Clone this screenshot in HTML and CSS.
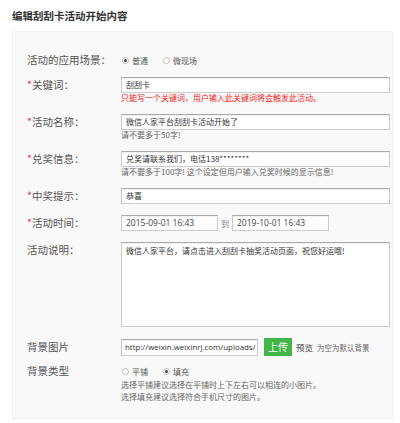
FILE: index.html
```html
<!DOCTYPE html>
<html lang="zh-CN">
<head>
<meta charset="utf-8">
<title>编辑刮刮卡活动开始内容</title>
<link rel="stylesheet" href="styles.css">
</head>
<body>
<h2 class="title">编辑刮刮卡活动开始内容</h2>
<div class="panel">
  <div class="row row-first">
    <div class="label">活动的应用场景：</div>
    <div class="field radios">
      <span class="radio on"></span><span class="rtext">普通</span>
      <span class="radio"></span><span class="rtext">微现场</span>
    </div>
  </div>
  <div class="row row-kw">
    <div class="label"><span class="req">*</span>关键词：</div>
    <div class="field">
      <div class="input wide">刮刮卡</div>
      <div class="help red">只能写一个关键词，用户输入此关键词将会触发此活动。</div>
    </div>
  </div>
  <div class="row">
    <div class="label"><span class="req">*</span>活动名称：</div>
    <div class="field">
      <div class="input wide">微信人家平台刮刮卡活动开始了</div>
      <div class="help">请不要多于50字!</div>
    </div>
  </div>
  <div class="row">
    <div class="label"><span class="req">*</span>兑奖信息：</div>
    <div class="field">
      <div class="input wide">兑奖请联系我们，电话138********</div>
      <div class="help">请不要多于100字! 这个设定但用户输入兑奖时候的显示信息!</div>
    </div>
  </div>
  <div class="row">
    <div class="label"><span class="req">*</span>中奖提示：</div>
    <div class="field">
      <div class="input wide">恭喜</div>
    </div>
  </div>
  <div class="row">
    <div class="label"><span class="req">*</span>活动时间：</div>
    <div class="field time">
      <div class="input date">2015-09-01 16:43</div>
      <span class="to">到</span>
      <div class="input date">2019-10-01 16:43</div>
    </div>
  </div>
  <div class="row">
    <div class="label">活动说明：</div>
    <div class="field">
      <div class="input textarea">微信人家平台，请点击进入刮刮卡抽奖活动页面，祝您好运哦!</div>
    </div>
  </div>
  <div class="row row-bg">
    <div class="label">背景图片</div>
    <div class="field upload">
      <div class="input url">http://weixin.weixinrj.com/uploads/</div>
      <span class="btn">上传</span>
      <span class="preview">预览</span>
      <span class="note">为空为默认背景</span>
    </div>
  </div>
  <div class="row row-type">
    <div class="label">背景类型</div>
    <div class="field">
      <div class="radios">
        <span class="radio"></span><span class="rtext">平铺</span>
        <span class="radio on"></span><span class="rtext">填充</span>
      </div>
      <div class="help2">选择平铺建议选择在平铺时上下左右可以相连的小图片。</div>
      <div class="help2">选择填充建议选择符合手机尺寸的图片。</div>
    </div>
  </div>
</div>
</body>
</html>
```

FILE: styles.css
```css
html, body {
  margin: 0;
  padding: 0;
  background: #fff;
}
body {
  font-family: "Noto Sans CJK SC", "Noto Sans", sans-serif;
  color: #555;
}
.title {
  margin: 0;
  padding: 9px 12px 0;
  font-size: 10.5px;
  line-height: 14px;
  font-weight: bold;
  color: #333;
}
.panel {
  margin: 8px 0 0 12px;
  width: 381px;
  box-sizing: border-box;
  background: #f9f9f9;
  border: 1px solid #f0f0f0;
  padding: 20px 0 15px 14px;
}
.row {
  display: flex;
  align-items: flex-start;
  margin-top: 11px;
}
.row-first { margin-top: 0; }
.row-kw { margin-top: 9px; }
.row-bg { margin-top: 11px; }
.row-type { margin-top: 7px; }
.label {
  width: 94px;
  flex: none;
  font-size: 10.5px;
  line-height: 16px;
  color: #555;
  white-space: nowrap;
}
.row-bg .label { line-height: 18px; }
.req { color: #e33; }
.field {
  flex: none;
  font-size: 8px;
}
.radios {
  display: flex;
  align-items: center;
  height: 16px;
  font-size: 8px;
  color: #555;
}
.radio {
  width: 7px;
  height: 7px;
  box-sizing: border-box;
  border: 1px solid #bbb;
  border-radius: 50%;
  background: #fff;
  position: relative;
  margin: 0 3px 0 1px;
}
.radio.on::after {
  content: "";
  position: absolute;
  left: 1px;
  top: 1px;
  width: 3px;
  height: 3px;
  border-radius: 50%;
  background: #444;
}
.rtext { margin-right: 14px; }
.input {
  box-sizing: border-box;
  height: 16px;
  background: #fff;
  border: 1px solid #ccc;
  border-top-color: #aaa;
  box-shadow: inset 0 1px 1px rgba(0, 0, 0, 0.06);
  font-size: 8px;
  line-height: 14px;
  padding: 0 4px;
  color: #333;
  white-space: nowrap;
  overflow: hidden;
}
.wide { width: 269px; }
.help {
  font-size: 8px;
  line-height: 10px;
  color: #666;
  white-space: nowrap;
}
.help.red { color: #e22; }
.time {
  display: flex;
  align-items: center;
}
.date {
  width: 97px;
  font-family: "Open Sans", "Noto Sans CJK SC", sans-serif;
  font-size: 8.5px;
  color: #444;
}
.to {
  width: 14px;
  text-align: center;
  font-size: 8px;
  color: #888;
}
.textarea {
  width: 269px;
  height: 85px;
  padding: 2px 4px;
  white-space: normal;
  line-height: 12px;
}
.upload {
  display: flex;
  align-items: center;
  height: 18px;
}
.url {
  width: 137px;
  height: 17px;
  line-height: 15px;
  padding: 0 2px 0 3px;
  font-family: "Open Sans", "Noto Sans CJK SC", sans-serif;
  font-size: 7.9px;
  color: #333;
}
.btn {
  margin-left: 6px;
  width: 28px;
  height: 18px;
  line-height: 18px;
  text-align: center;
  background: #44b549;
  color: #fff;
  font-size: 10px;
}
.preview {
  margin-left: 4px;
  font-size: 8.5px;
  color: #444;
}
.note {
  margin-left: 4px;
  font-size: 7.5px;
  color: #666;
}
.help2 {
  font-size: 8px;
  line-height: 12px;
  color: #666;
  white-space: nowrap;
}
```
